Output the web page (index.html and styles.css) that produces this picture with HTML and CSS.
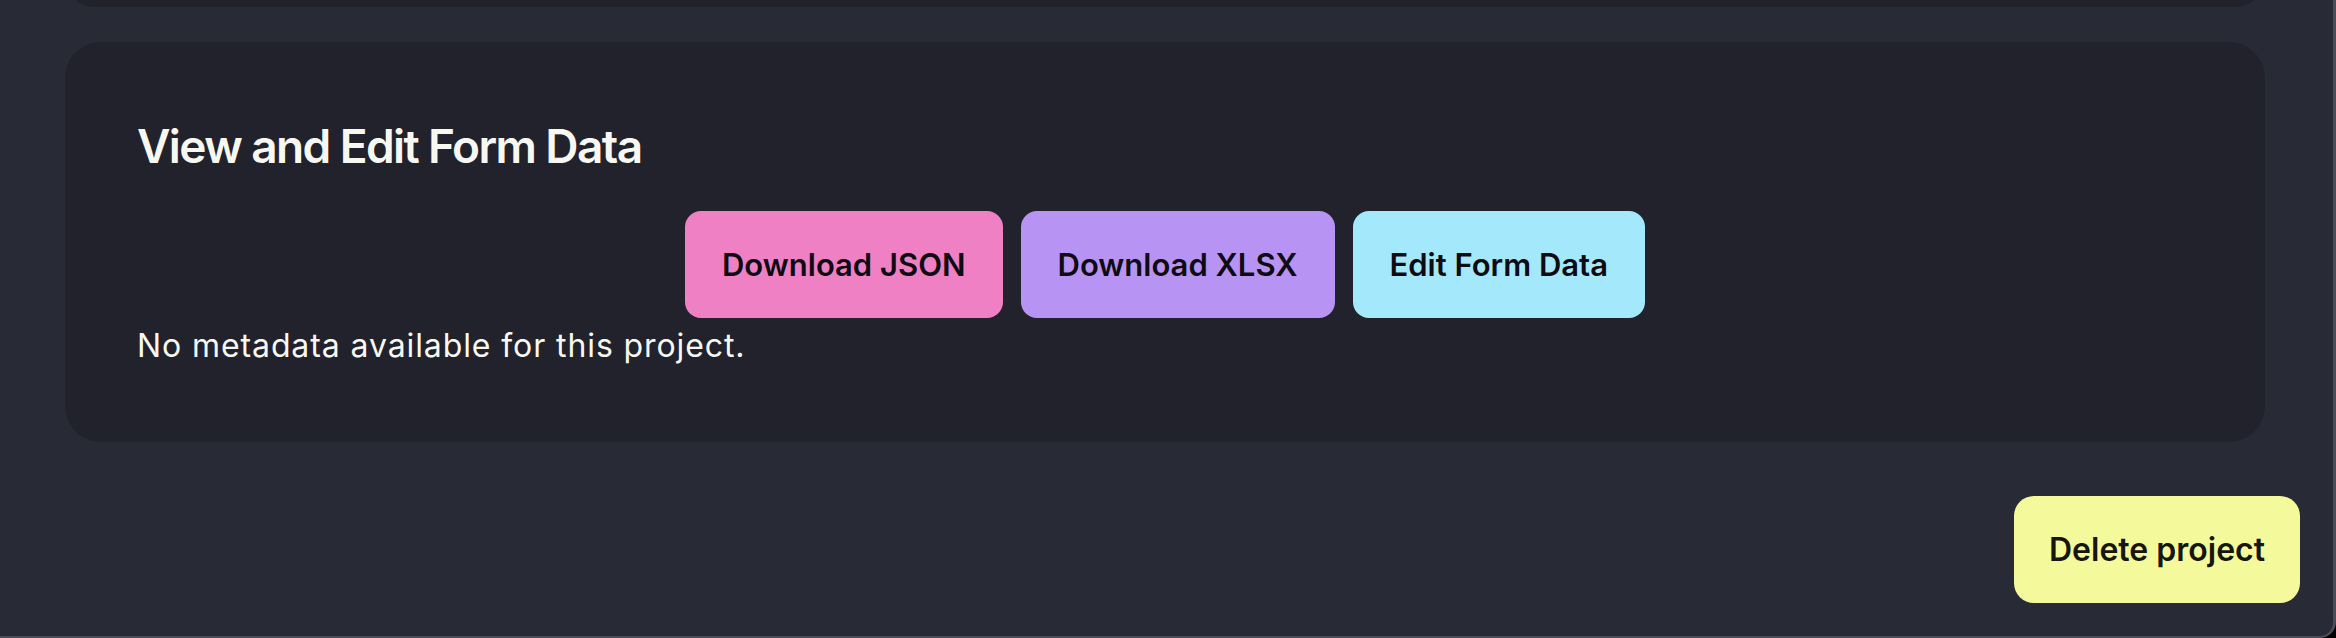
FILE: index.html
```html
<!DOCTYPE html>
<html lang="en">
<head>
<meta charset="utf-8">
<title>Project</title>
<link rel="stylesheet" href="styles.css">
</head>
<body>
<div class="window">
  <div class="card card-prev"></div>
  <section class="card card-form">
    <h2 class="card-title">View and Edit Form Data</h2>
    <div class="actions">
      <button class="btn btn-pink">Download JSON</button>
      <button class="btn btn-purple">Download XLSX</button>
      <button class="btn btn-cyan">Edit Form Data</button>
    </div>
    <p class="empty">No metadata available for this project.</p>
  </section>
  <div class="footer">
    <button class="btn btn-yellow">Delete project</button>
  </div>
</div>
</body>
</html>
```
FILE: styles.css
```css
* { box-sizing: border-box; }
html, body {
  margin: 0;
  padding: 0;
  background: #000;
  height: 638px;
  overflow: hidden;
}
body {
  font-family: Inter, "Noto Sans", "Liberation Sans", sans-serif;
  color: #f8f8f2;
}
.window {
  width: 2336px;
  height: 638px;
  background: #282a36;
  border-right: 3px solid #4b4c56;
  border-bottom: 2px solid #4b4c56;
  border-bottom-right-radius: 16px;
  padding: 0 68px 0 65px;
  overflow: hidden;
}
.card {
  background: #21222c;
  border-radius: 36px;
}
.card-prev {
  height: 60px;
  margin-top: -53px;
}
.card-form {
  margin-top: 35px;
  padding: 72px;
  height: 400px;
}
.card-title {
  margin: 0 0 33px;
  font-size: 46px;
  line-height: 64px;
  font-weight: 600;
  letter-spacing: -1.6px;
}
.actions {
  display: flex;
  justify-content: center;
  gap: 18px;
  height: 107px;
}
.btn {
  font-family: Inter, "Noto Sans", "Liberation Sans", sans-serif;
  border: none;
  border-radius: 16px;
  font-size: 31px;
  font-weight: 600;
  color: #0e0b13;
  padding: 0 37px;
  height: 107px;
  line-height: 107px;
  white-space: nowrap;
}
.btn-pink { background: #ef80c4; }
.btn-purple { background: #b794f4; }
.btn-cyan { background: #a4e8fc; }
.btn-yellow {
  background: #f4fa9c;
  color: #16160c;
  padding: 0;
  border-radius: 20px;
  font-size: 32px;
  width: 286px;
  text-align: center;
}
.empty {
  margin: 4px 0 0;
  font-size: 32px;
  line-height: 48px;
  font-weight: 400;
  letter-spacing: 0.9px;
}
.footer {
  display: flex;
  justify-content: flex-end;
  margin-top: 54px;
  margin-right: -35px;
}
```
